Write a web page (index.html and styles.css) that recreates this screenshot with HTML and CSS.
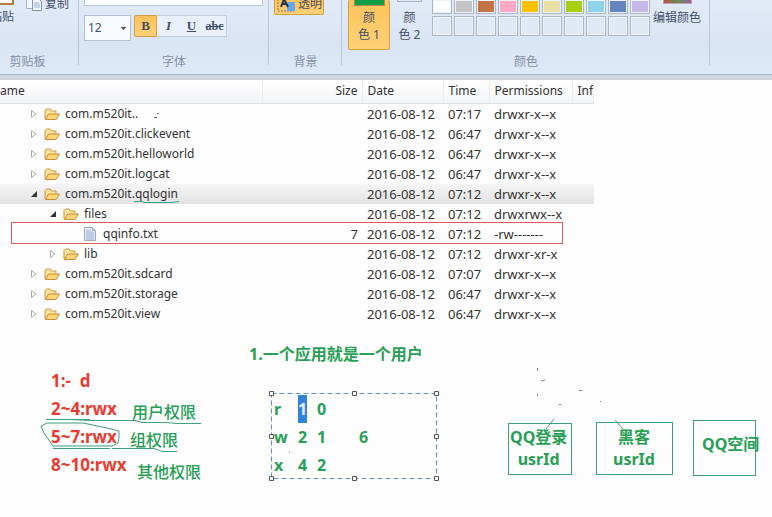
FILE: index.html
```html
<!DOCTYPE html>
<html lang="zh-CN">
<head>
<meta charset="utf-8">
<title>画图</title>
<link rel="stylesheet" href="styles.css">
</head>
<body>
<svg class="symbols" aria-hidden="true">
  <symbol id="folder" viewBox="0 0 16 14">
    <path d="M1 12V3.500L2.500 2H6l1.500 2H12v2.500" fill="#fbe3a0" stroke="#cf9440"/>
    <path d="M1.500 12.500 4.500 7H15.500L12 12.500Z" fill="#fbd579" stroke="#c98b35"/>
  </symbol>
  <symbol id="closed" viewBox="0 0 8 10"><path d="M1.500 1.500v7L6 5Z" fill="#fff" stroke="#a8a8a8"/></symbol>
  <symbol id="open" viewBox="0 0 8 10"><path d="M7 2v6H1Z" fill="#333"/></symbol>
  <symbol id="file" viewBox="0 0 14 14">
    <path d="M1.500.500h8l3 3v10h-11Z" fill="#e3eafa" stroke="#a5abb8"/>
    <path d="M9.500.500v3h3M3 4h5M3 6h8M3 8h8M3 10h8M3 12h8" fill="none" stroke="#9aaad2"/>
  </symbol>
</svg>

<header class="ribbon">
  <section class="group clipboard">
    <div class="tools">
      <button class="paste"><span class="paste-icon"></span>粘贴</button>
      <button class="copy">
        <svg width="18" height="16" viewBox="0 0 18 16"><path d="M1.500.500h7v12h-7Z" fill="#f4f7fc" stroke="#a7b1c2"/><path d="M7.500 2.500h6l3 3v9h-9Z" fill="#f4f7fc" stroke="#8793a8"/><path d="M9 7h5M9 9h6M9 11h6" stroke="#8ba9d4"/></svg>
        复制
      </button>
    </div>
    <h2>剪贴板</h2>
  </section>
  <section class="group font">
    <div class="tools">
      <input class="family" aria-label="字体">
      <div class="format">
        <select class="size" aria-label="字号"><option>12</option><option>14</option></select>
        <div class="styles">
          <button class="bold active">B</button><button class="italic">I</button><button class="under">U</button><button class="strike">abc</button>
        </div>
      </div>
    </div>
    <h2>字体</h2>
  </section>
  <section class="group background">
    <div class="tools">
      <button class="transparent active">
        <svg width="18" height="14" viewBox="0 0 18 14"><path d="M1 0v12h16" fill="none" stroke="#8b7650" stroke-dasharray="2 1"/><path d="M10 3h8v9h-8Z" fill="#65a8ef"/><path d="M4 8 7 0l4 8M5 5h5" fill="none" stroke="#26344a" stroke-width="2"/></svg>
        透明
      </button>
    </div>
    <h2>背景</h2>
  </section>
  <section class="group colors">
    <div class="tools">
      <button class="color active"><span class="swatch green"></span>颜<br>色 1</button>
      <button class="color second"><span class="swatch"></span>颜<br>色 2</button>
      <div class="palette">
        <button class="c1" aria-label="白色"></button><button class="c2" aria-label="浅灰"></button><button class="c3" aria-label="褐色"></button><button class="c4" aria-label="玫瑰色"></button><button class="c5" aria-label="金色"></button><button class="c6" aria-label="浅黄"></button><button class="c7" aria-label="酸橙色"></button><button class="c8" aria-label="淡青绿"></button><button class="c9" aria-label="蓝灰色"></button><button class="c10" aria-label="淡紫色"></button>
        <button aria-label="自定义 1"></button><button aria-label="自定义 2"></button><button aria-label="自定义 3"></button><button aria-label="自定义 4"></button><button aria-label="自定义 5"></button><button aria-label="自定义 6"></button><button aria-label="自定义 7"></button><button aria-label="自定义 8"></button><button aria-label="自定义 9"></button><button aria-label="自定义 10"></button>
      </div>
      <button class="edit"><span class="spectrum"></span>编辑颜色</button>
    </div>
    <h2>颜色</h2>
  </section>
</header>

<main class="canvas">
  <table class="files">
    <colgroup><col class="w-name"><col class="w-size"><col class="w-date"><col class="w-time"><col class="w-perm"><col></colgroup>
    <thead><tr><th>Name</th><th class="num">Size</th><th>Date</th><th>Time</th><th>Permissions</th><th>Info</th></tr></thead>
    <tbody>
      <tr><td><div class="node"><svg class="arrow"><use href="#closed"/></svg><svg class="icon"><use href="#folder"/></svg>com.m520it..</div></td><td></td><td>2016-08-12</td><td>07:17</td><td>drwxr-x--x</td><td></td></tr>
      <tr><td><div class="node"><svg class="arrow"><use href="#closed"/></svg><svg class="icon"><use href="#folder"/></svg>com.m520it.clickevent</div></td><td></td><td>2016-08-12</td><td>06:47</td><td>drwxr-x--x</td><td></td></tr>
      <tr><td><div class="node"><svg class="arrow"><use href="#closed"/></svg><svg class="icon"><use href="#folder"/></svg>com.m520it.helloworld</div></td><td></td><td>2016-08-12</td><td>06:47</td><td>drwxr-x--x</td><td></td></tr>
      <tr><td><div class="node"><svg class="arrow"><use href="#closed"/></svg><svg class="icon"><use href="#folder"/></svg>com.m520it.logcat</div></td><td></td><td>2016-08-12</td><td>06:47</td><td>drwxr-x--x</td><td></td></tr>
      <tr class="selected"><td><div class="node"><svg class="arrow"><use href="#open"/></svg><svg class="icon"><use href="#folder"/></svg>com.m520it.qqlogin</div></td><td></td><td>2016-08-12</td><td>07:12</td><td>drwxr-x--x</td><td></td></tr>
      <tr><td><div class="node child"><svg class="arrow"><use href="#open"/></svg><svg class="icon"><use href="#folder"/></svg>files</div></td><td></td><td>2016-08-12</td><td>07:12</td><td>drwxrwx--x</td><td></td></tr>
      <tr><td><div class="node leaf"><svg class="icon"><use href="#file"/></svg>qqinfo.txt</div></td><td class="num">7</td><td>2016-08-12</td><td>07:12</td><td>-rw-------</td><td></td></tr>
      <tr><td><div class="node child"><svg class="arrow"><use href="#closed"/></svg><svg class="icon"><use href="#folder"/></svg>lib</div></td><td></td><td>2016-08-12</td><td>07:12</td><td>drwxr-xr-x</td><td></td></tr>
      <tr><td><div class="node"><svg class="arrow"><use href="#closed"/></svg><svg class="icon"><use href="#folder"/></svg>com.m520it.sdcard</div></td><td></td><td>2016-08-12</td><td>07:07</td><td>drwxr-x--x</td><td></td></tr>
      <tr><td><div class="node"><svg class="arrow"><use href="#closed"/></svg><svg class="icon"><use href="#folder"/></svg>com.m520it.storage</div></td><td></td><td>2016-08-12</td><td>06:47</td><td>drwxr-x--x</td><td></td></tr>
      <tr><td><div class="node"><svg class="arrow"><use href="#closed"/></svg><svg class="icon"><use href="#folder"/></svg>com.m520it.view</div></td><td></td><td>2016-08-12</td><td>06:47</td><td>drwxr-x--x</td><td></td></tr>
    </tbody>
  </table>

  <!-- Pencil strokes and shapes drawn on the canvas -->
  <svg class="ink" width="772" height="437" viewBox="0 80 772 437" fill="none" stroke="#3f9f78" aria-hidden="true">
    <rect x="11.500" y="222.500" width="551" height="21" stroke="#dc5a5a"/>
    <path d="M134 201.500h8l2 1h28l7-1" stroke="#35a08a"/>
    <path d="M154 117.500h3M157 113.500h2" stroke="#666"/>
    <path d="M46 419.500h25l20 1h44l7 2h24l11 1h24M60 419.500h30"/>
    <path d="M119 431 107 428 83 423H47l-6 3 3 7 9 13h59l6-3 1-5v-7M53 448.500h57M112 448.500h42l8 3h15"/>
    <rect x="508.500" y="423.500" width="63" height="51"/>
    <rect x="596.500" y="422.500" width="76" height="52"/>
    <rect x="693.500" y="420.500" width="62" height="55"/>
    <path d="m554 419-8 10M615 420l8 9"/>
    <path d="M537.500 368v3M541 381l4-1M537.500 394v2M579 390.500h3M559 404.500h2M600 401.500h1M289 452.500h1" stroke="#6d8c7e"/>
  </svg>

  <ul class="modes">
    <li>1:-&nbsp; d</li><li>2~4:rwx</li><li>5~7:rwx</li><li>8~10:rwx</li>
  </ul>
  <p class="note user">用户权限</p>
  <p class="note team">组权限</p>
  <p class="note other">其他权限</p>
  <p class="note title">1.一个应用就是一个用户</p>

  <div class="textbox">
    <div class="bits">
      <span>r</span><mark>1</mark><span>0</span><span></span>
      <span>w</span><span>2</span><span>1</span><span>6</span>
      <span>x</span><span>4</span><span>2</span><span></span>
    </div>
    <svg class="frame" width="172" height="92" viewBox="0 0 172 92" fill="none" aria-hidden="true">
      <path d="M3.500 3.500h165v85h-165Z" stroke="#5b8fd6" stroke-dasharray="5 3"/>
      <g fill="#fff" stroke="#555"><path d="M1.500 1.500h4v4h-4ZM84.500 1.500h4v4h-4ZM166.500 1.500h4v4h-4ZM1.500 44.500h4v4h-4ZM166.500 44.500h4v4h-4ZM1.500 86.500h4v4h-4ZM84.500 86.500h4v4h-4ZM166.500 86.500h4v4h-4Z"/></g>
    </svg>
  </div>

  <p class="note login">QQ登录<br>usrId</p>
  <p class="note hacker">黑客<br>usrId</p>
  <p class="note zone">QQ空间</p>
</main>
</body>
</html>
```

FILE: styles.css
```css
* { box-sizing: border-box; }

body {
  margin: 0;
  min-height: 100vh;
  display: flex;
  flex-direction: column;
  overflow: hidden;
  background: #fdfdfd;
  color: #3a3a3a;
  font: 13px/20px "Noto Sans", "Noto Sans CJK SC", sans-serif;
}

button, input, select {
  margin: 0;
  padding: 0;
  border: 0;
  background: none;
  color: inherit;
  font: inherit;
}

.symbols { display: none; }

/* Ribbon */
.ribbon {
  display: flex;
  flex: none;
  height: 80px;
  border-bottom: 5px solid #ced6e2;
  background: linear-gradient(#e1eaf6, #d9e4f4 60%, #dee9f8);
  box-shadow: inset 0 -1px #a9b5c6;
  color: #43506a;
  font-size: 12px;
}

.group {
  position: relative;
  display: flex;
  flex-direction: column;
  align-items: center;
  height: 75px;
}

.group::after {
  content: "";
  position: absolute;
  right: 0;
  top: 0;
  height: 65px;
  border-right: 1px solid #bcc8da;
}

.tools { display: flex; width: 100%; height: 52px; }
.group h2 { margin: 0; color: #8490a6; font-size: 12px; font-weight: 400; line-height: 20px; }
.active { background: linear-gradient(#ffc35a, #ffd077); border: 1px solid #d49f42; border-radius: 2px; }

.clipboard { width: 79px; }
.clipboard h2 { margin-right: 24px; }
.clipboard .tools { align-items: flex-start; justify-content: space-between; }
.paste { display: flex; flex-direction: column; align-items: flex-end; width: 14px; white-space: nowrap; }
.paste-icon { width: 14px; height: 5px; margin-bottom: 2px; border: solid #b27b38; border-width: 0 2px 2px 0; background: #fff; }
.copy { display: flex; align-items: flex-start; gap: 2px; padding-right: 10px; line-height: 8px; white-space: nowrap; }
.copy svg { margin-top: -4px; }

.font { width: 190px; }
.font .tools { flex-direction: column; gap: 9px; padding-left: 5px; }
.family { width: 179px; height: 6px; border: 1px solid #b8c5d8; border-top: 0; background: #fbfdff; }
.format { display: flex; gap: 3px; }
.size {
  width: 47px;
  height: 26px;
  padding-left: 3px;
  border: 1px solid #b3c1d6;
  appearance: none;
  background: linear-gradient(#55617a, #55617a) 36px 11px / 5px 1px no-repeat,
    linear-gradient(#55617a, #55617a) 37px 12px / 3px 1px no-repeat,
    linear-gradient(#55617a, #55617a) 38px 13px / 1px 1px no-repeat, #f8fbff;
}
.styles { display: flex; height: 22px; border: 1px solid #c3cfe0; background: #e9f0fa; }
.styles button { width: 23px; font: bold 13px/16px "Liberation Serif", serif; }
.styles .bold { border: 1px solid #d49f42; margin: -1px 0 -1px -1px; }
.styles .italic { font-style: italic; }
.styles .under { text-decoration: underline; }
.styles .strike { font-size: 12px; text-decoration: line-through; }

.background { width: 73px; }
.background .tools { justify-content: center; align-items: flex-start; }
.transparent { display: flex; gap: 3px; width: 50px; height: 16px; margin-top: -1px; margin-right: 13px; padding-left: 2px; border-top: 0; line-height: 10px; white-space: nowrap; }

.colors { width: 368px; }
.colors .tools { align-items: flex-start; padding-left: 6px; }
.color { display: flex; flex-direction: column; align-items: center; width: 42px; height: 50px; line-height: 17px; }
.color.active { border-top: 0; }
.color.second { width: 41px; padding-right: 2px; }
.swatch { width: 31px; height: 6px; margin-bottom: 3px; border: 1px solid #a88c50; border-top: 0; }
.swatch.green { background: #119c48; }
.second .swatch { width: 25px; height: 2px; margin-bottom: 7px; border-color: #a5afbf; }
.palette { display: grid; grid-template-columns: repeat(10, 20px); gap: 2px; margin-left: 1px; }
.palette button { height: 20px; border: 1px solid #acb6c4; background: #e0e8f4; box-shadow: inset 0 0 0 1px #edf3fa; }
.palette button:nth-child(-n+10) { height: 14px; border-top: 0; }
.palette .c1 { background: #fff; }
.palette .c2 { background: #c3c3c3; }
.palette .c3 { background: #c47346; }
.palette .c4 { background: #ffa9c4; }
.palette .c5 { background: #ffc000; }
.palette .c6 { background: #ebe0a4; }
.palette .c7 { background: #a9d00e; }
.palette .c8 { background: #8fd3ea; }
.palette .c9 { background: #6385c1; }
.palette .c10 { background: #c5b8e6; }
.edit { display: flex; flex-direction: column; align-items: center; margin-left: 3px; white-space: nowrap; }
.spectrum { width: 29px; height: 4px; margin-bottom: 4px; border: 1px solid #c0a4a8; border-top: 0; background: linear-gradient(90deg, #bd4c4c, #678c55, #9560a2); }

/* File listing pasted on the canvas */
.canvas { position: relative; flex: 1; }
.files { width: 77%; table-layout: fixed; border-collapse: collapse; color: #333; }
.w-name { width: 262px; }
.w-size { width: 100px; }
.w-date { width: 81px; }
.w-time { width: 46px; }
.w-perm { width: 83px; }
.files th, .files td { height: 20px; padding: 0 0 0 5px; overflow: hidden; font-weight: 400; text-align: left; white-space: nowrap; }
.files th { height: 23px; border-right: 1px solid #ececec; border-bottom: 1px solid #dedede; background: linear-gradient(#fff, #f2f3f5); font-size: 12px; }
.files th:first-child { text-indent: -14px; }
.files .num { padding-right: 4px; text-align: right; }
.selected { background: linear-gradient(#f5f5f5, #e3e3e3); }
.node { display: flex; align-items: center; padding-left: 25px; font-size: 12px; }
.node.child { padding-left: 44px; }
.node.leaf { padding-left: 78px; }
.arrow { width: 8px; height: 10px; margin-right: 6px; }
.icon { width: 16px; height: 14px; margin-right: 5px; }
.leaf .icon { width: 14px; margin-right: 6px; }

/* Text placed on the canvas */
.ink { position: absolute; left: 0; top: 0; }
.modes, .note, .bits {
  margin: 0;
  padding: 0;
  color: #27a055;
  font: bold 16px/28px "Noto Sans", "Noto Sans CJK SC", sans-serif;
  list-style: none;
  white-space: nowrap;
}
.modes { position: absolute; left: 51px; top: 287px; color: #ea3b30; font-size: 17px; }
.note { position: absolute; line-height: 22px; }
.user { left: 132px; top: 321px; font-weight: 500; }
.team { left: 130px; top: 349px; font-weight: 500; }
.other { left: 137px; top: 381px; font-weight: 500; }
.title { left: 249px; top: 263px; }
.login { left: 510px; top: 346px; text-align: center; }
.hacker { left: 613px; top: 346px; text-align: center; }
.zone { left: 702px; top: 353px; }

.textbox { position: absolute; left: 268px; top: 310px; }
.bits { display: grid; grid-template-columns: 24px 19px 42px 40px; padding: 5px 6px; }
.bits mark { justify-self: start; background: #3182db; color: #e2f1ff; }
.frame { position: absolute; left: 0; top: 0; }
```
